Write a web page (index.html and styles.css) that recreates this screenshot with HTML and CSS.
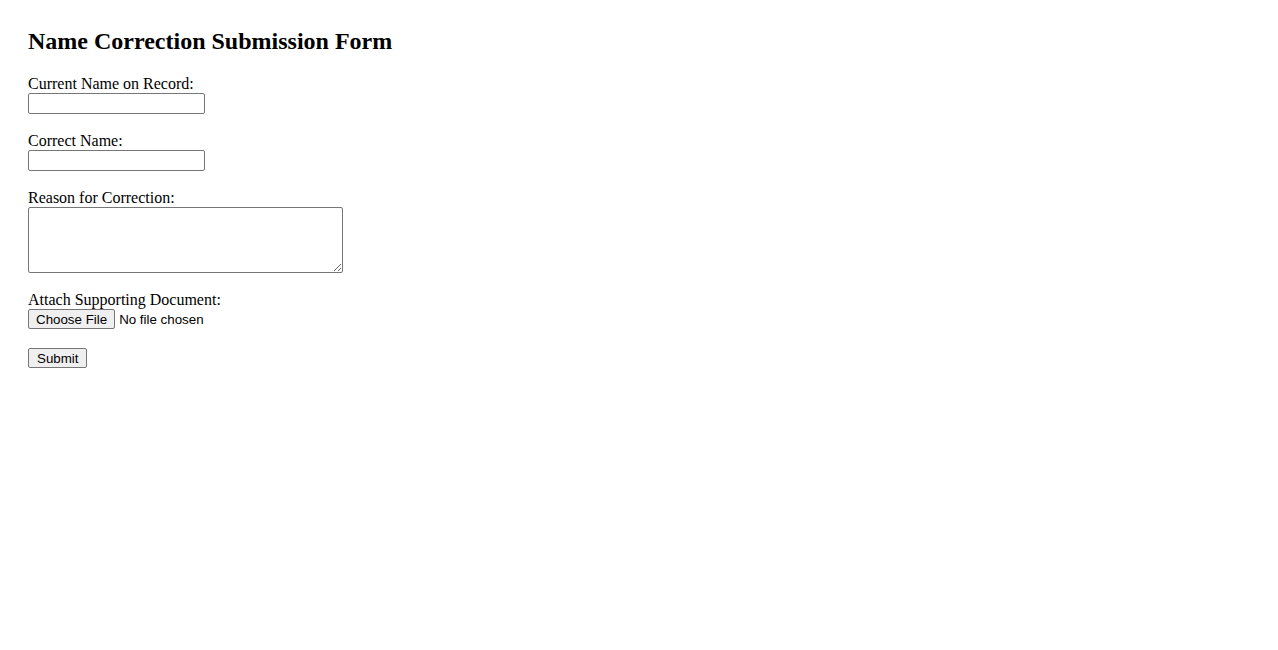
FILE: index.html
```html
<!DOCTYPE html>
<html>
<head>
<meta charset="utf-8">
<title>Name Correction Submission Form</title>
<link rel="stylesheet" href="styles.css">
</head>
<body>
<h2 class="title">Name Correction Submission Form</h2>
<form class="form">
  <div class="field">
    <label class="label" for="current">Current Name on Record:</label>
    <input class="text-input" type="text" id="current">
  </div>
  <div class="field">
    <label class="label" for="correct">Correct Name:</label>
    <input class="text-input" type="text" id="correct">
  </div>
  <div class="field">
    <label class="label" for="reason">Reason for Correction:</label>
    <textarea class="text-area" id="reason"></textarea>
  </div>
  <div class="field">
    <label class="label" for="doc">Attach Supporting Document:</label>
    <div class="file-row"><span class="btn">Choose File</span><span class="file-name">No file chosen</span></div>
  </div>
  <div class="field submit-field">
    <button class="btn" type="button">Submit</button>
  </div>
</form>
</body>
</html>
```
FILE: styles.css
```css
html, body {
  background: #ffffff;
}
body {
  margin: 8px;
  padding: 20px;
  font-family: "Liberation Serif", "Times New Roman", serif;
  font-size: 16px;
  color: #000000;
}
.title {
  margin: 0 0 19px 0;
  font-size: 24px;
  font-weight: bold;
  line-height: 27px;
}
.form {
  margin: 0;
}
.field {
  margin-bottom: 17px;
}
.submit-field {
  margin-top: 19px;
}
.label {
  display: block;
  line-height: 19px;
}
.text-input {
  display: block;
  box-sizing: border-box;
  width: 177px;
  height: 21px;
  margin: 0;
  padding: 1px 2px;
  border: 1px solid #767676;
  border-radius: 2px;
  background: #ffffff;
  font-family: "Liberation Sans", Arial, sans-serif;
  font-size: 13.333px;
}
.text-area {
  display: block;
  box-sizing: border-box;
  width: 315px;
  height: 66px;
  margin: 0;
  padding: 2px;
  border: 1px solid #767676;
  border-radius: 2px;
  background: #ffffff;
  font-family: "Liberation Mono", monospace;
  font-size: 13.333px;
}
.file-row {
  display: flex;
  align-items: center;
  font-family: "Liberation Sans", Arial, sans-serif;
  font-size: 13.333px;
}
.file-name {
  margin-left: 4px;
}
.btn {
  box-sizing: border-box;
  display: inline-flex;
  align-items: center;
  justify-content: center;
  height: 20px;
  margin: 0;
  padding: 1px 7px;
  border: 1px solid #767676;
  border-radius: 2px;
  background: #efefef;
  color: #000000;
  font-family: "Liberation Sans", Arial, sans-serif;
  font-size: 13.333px;
}
.submit-field .btn {
  padding: 1px 8px;
}
```
